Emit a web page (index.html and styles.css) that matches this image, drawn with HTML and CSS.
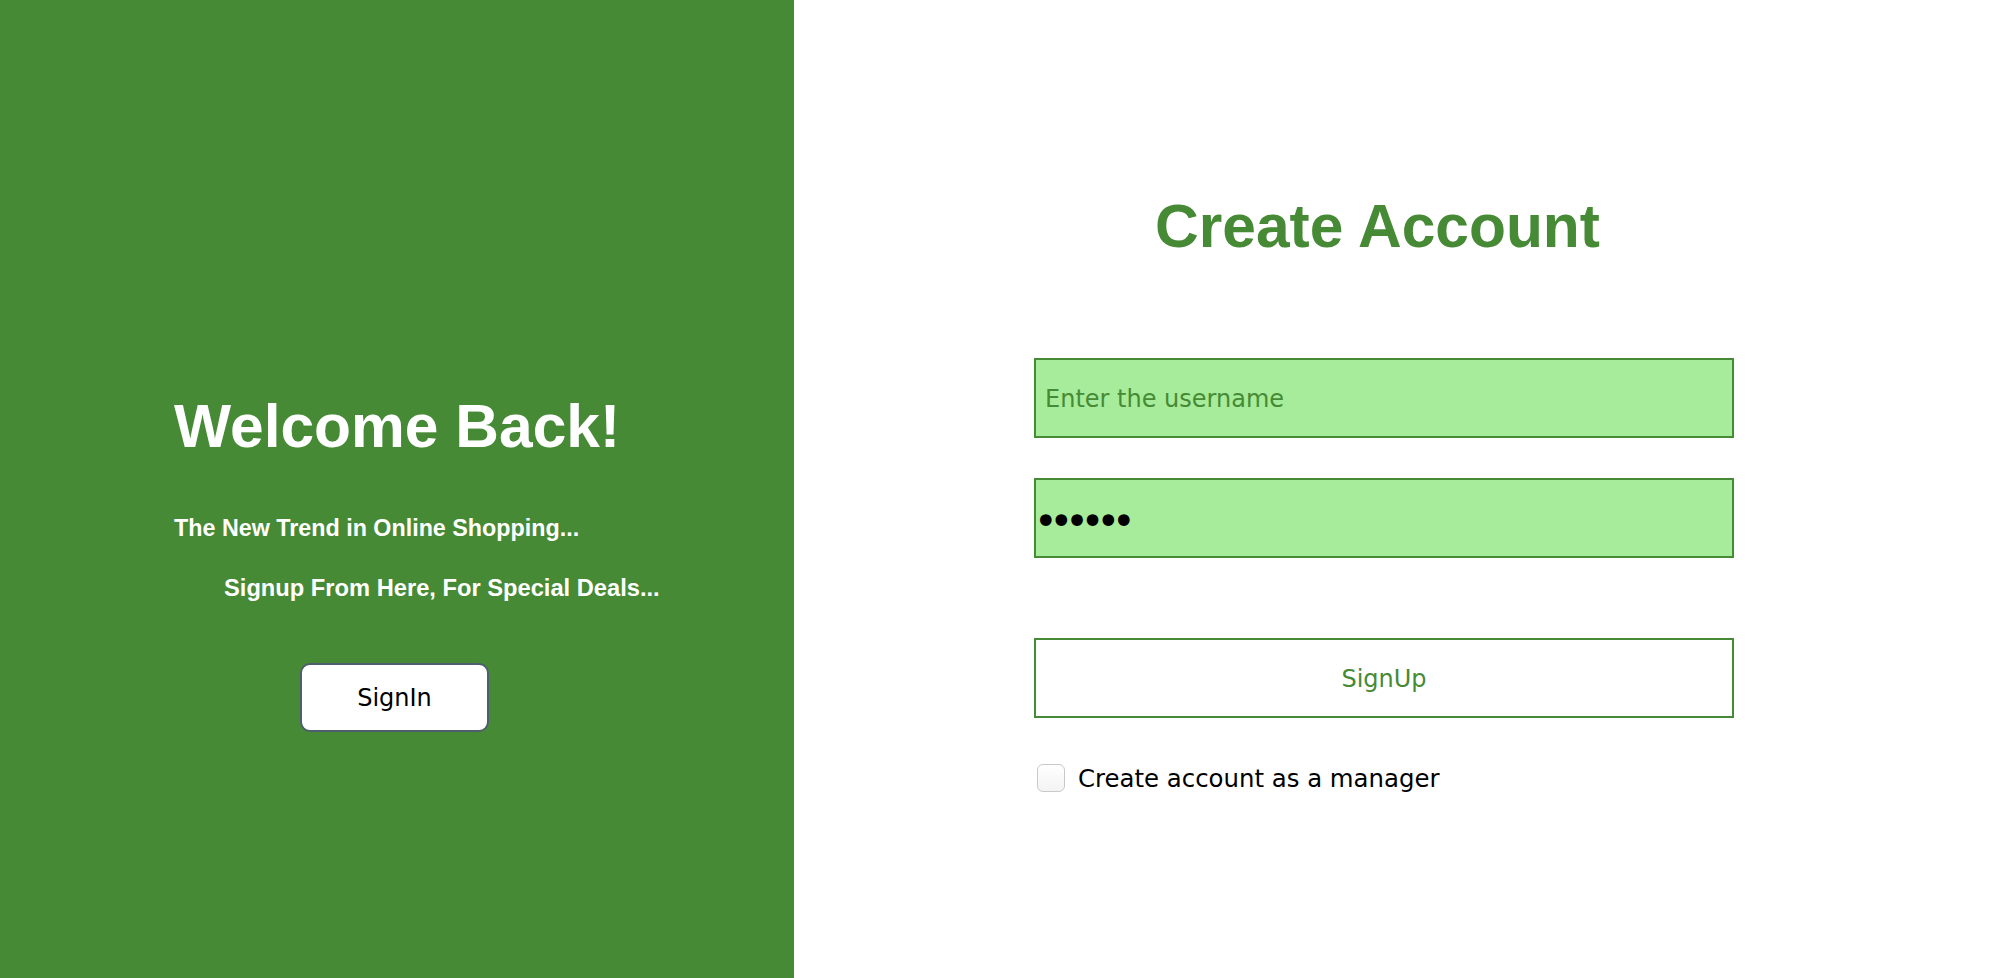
FILE: index.html
```html
<!DOCTYPE html>
<html lang="en">
<head>
<meta charset="utf-8">
<title>Create Account</title>
<link rel="stylesheet" href="styles.css">
</head>
<body>
<div class="page">
  <section class="welcome">
    <div class="welcome-inner">
      <h1 class="welcome-title">Welcome Back!</h1>
      <p class="tagline">The New Trend in Online Shopping...</p>
      <p class="tagline tagline-indent">Signup From Here, For Special Deals...</p>
      <button class="signin-btn" type="button">SignIn</button>
    </div>
  </section>
  <section class="signup">
    <form class="signup-form">
      <h1 class="signup-title">Create Account</h1>
      <input class="field field-user" type="text" placeholder="Enter the username">
      <input class="field field-pass" type="password" value="123456">
      <button class="signup-btn" type="button">SignUp</button>
      <label class="manager">
        <input class="manager-check" type="checkbox">
        <span>Create account as a manager</span>
      </label>
    </form>
  </section>
</div>
</body>
</html>
```
FILE: styles.css
```css
html, body {
  margin: 0;
  padding: 0;
}

body {
  font-family: "DejaVu Sans", sans-serif;
  background: #ffffff;
}

.page {
  display: flex;
  height: 978px;
}

.welcome {
  width: 794px;
  flex: 0 0 794px;
  background: #468a35;
  color: #ffffff;
  padding-top: 393px;
  box-sizing: border-box;
}

.welcome-inner {
  margin-left: 174px;
  width: 445px;
  display: flex;
  flex-direction: column;
  align-items: flex-start;
}

.welcome-title {
  font-family: "Liberation Sans", Arial, sans-serif;
  font-weight: 700;
  font-size: 60.5px;
  line-height: 67px;
  margin: 0;
  white-space: nowrap;
}

.tagline {
  font-family: "Liberation Sans", Arial, sans-serif;
  font-weight: 700;
  font-size: 23.3px;
  line-height: 26px;
  margin: 55px 0 0 0;
  white-space: nowrap;
}

.tagline-indent {
  margin-top: 34px;
  padding-left: 50px;
  font-size: 23.7px;
}

.signin-btn {
  margin: 62px 0 0 126px;
  width: 189px;
  height: 69px;
  background: #ffffff;
  border: 2px solid #4d5f6e;
  border-radius: 10px;
  font-family: "DejaVu Sans", sans-serif;
  font-size: 24px;
  color: #000000;
  padding: 0;
}

.signup {
  flex: 1;
}

.signup-form {
  margin-left: 240px;
  width: 700px;
  padding-top: 193px;
  display: flex;
  flex-direction: column;
}

.signup-title {
  font-family: "Liberation Sans", Arial, sans-serif;
  font-weight: 700;
  font-size: 60.5px;
  line-height: 67px;
  color: #468a35;
  text-align: center;
  margin: 0;
  padding-right: 13px;
}

.field {
  box-sizing: border-box;
  width: 700px;
  height: 80px;
  background: #a7ec9a;
  border: 2px solid #468a35;
  border-radius: 0;
  outline: none;
  font-family: "DejaVu Sans", sans-serif;
  font-size: 24px;
  color: #000000;
  margin: 0;
}

.field-user {
  margin-top: 98px;
  padding: 2px 9px 0;
}

.field-user::placeholder {
  color: #468a35;
  opacity: 1;
}

.field-pass {
  margin-top: 40px;
  padding: 5px 0 0 0;
  font-size: 40px;
  letter-spacing: -8px;
  text-indent: -2px;
}

.signup-btn {
  box-sizing: border-box;
  margin-top: 80px;
  width: 700px;
  height: 80px;
  background: #ffffff;
  border: 2px solid #468a35;
  border-radius: 0;
  font-family: "DejaVu Sans", sans-serif;
  font-size: 24px;
  color: #468a35;
  padding: 2px 0 0;
}

.manager {
  display: flex;
  align-items: center;
  margin-top: 43px;
  font-size: 24.4px;
  color: #000000;
}

.manager-check {
  appearance: none;
  -webkit-appearance: none;
  box-sizing: border-box;
  width: 28px;
  height: 28px;
  margin: 3px 13px 3px 3px;
  border: 1px solid #c9c9c9;
  border-radius: 6px;
  background: linear-gradient(#ffffff, #f3f3f3);
}
```
